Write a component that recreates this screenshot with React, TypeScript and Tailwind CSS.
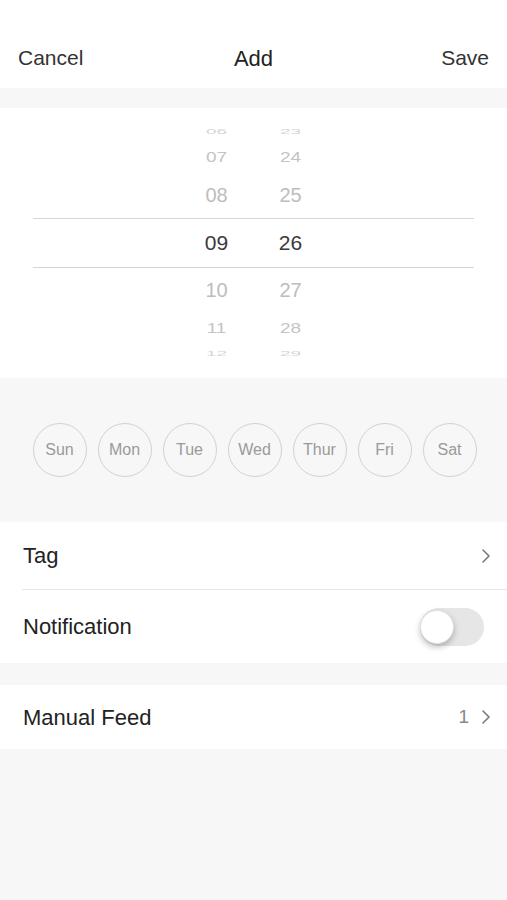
const hours = [
  { h: "06", m: "23", box: "h-[22px]", text: "text-[19px] text-[#d4d4d4] scale-y-[0.4]" },
  { h: "07", m: "24", box: "h-[30px]", text: "text-[19px] text-[#c4c4c4] scale-y-[0.75]" },
  { h: "08", m: "25", box: "h-[46px]", text: "text-[20px] text-[#bdbdbd]" },
];
const lower = [
  { h: "10", m: "27", box: "h-[44px]", text: "text-[20px] text-[#bdbdbd]" },
  { h: "11", m: "28", box: "h-[32px]", text: "text-[19px] text-[#c4c4c4] scale-y-[0.75]" },
  { h: "12", m: "29", box: "h-[18px]", text: "text-[19px] text-[#d4d4d4] scale-y-[0.4]" },
];
const days = ["Sun", "Mon", "Tue", "Wed", "Thur", "Fri", "Sat"];

const Chevron = () => (
  <svg width="10" height="16" viewBox="0 0 10 16" fill="none">
    <path d="M2 2l6 6-6 6" stroke="#7a7a7a" strokeWidth="1.6" strokeLinecap="round" strokeLinejoin="round" />
  </svg>
);

const PickerRow = ({ h, m, box, text }: { h: string; m: string; box: string; text: string }) => (
  <div className={`flex justify-center gap-[24px] items-center ${box}`}>
    <div className={`w-[50px] text-center leading-none ${text}`}>{h}</div>
    <div className={`w-[50px] text-center leading-none ${text}`}>{m}</div>
  </div>
);

const App = () => {
  return (
    <div className="w-[507px] h-[900px] bg-[#f7f7f7] font-['Liberation_Sans',Arial,sans-serif]">
      <header className="h-[88px] bg-white pt-[28px] px-[18px] grid grid-cols-3 items-center text-[21px] text-[#333]">
        <span>Cancel</span>
        <span className="text-center text-[22px] text-[#222]">Add</span>
        <span className="text-right pr-[-1px]">Save</span>
      </header>

      <section className="mt-[20px] h-[270px] bg-white px-[33px] pt-[12px]">
        {hours.map((r) => (
          <PickerRow key={r.h} {...r} />
        ))}
        <div className="h-[50px] border-y border-[#d6d6d6] flex justify-center gap-[24px] items-center">
          <div className="w-[50px] text-center text-[21px] text-[#3a3a3a]">09</div>
          <div className="w-[50px] text-center text-[21px] text-[#3a3a3a]">26</div>
        </div>
        {lower.map((r) => (
          <PickerRow key={r.h} {...r} />
        ))}
      </section>

      <section className="h-[144px] flex items-center justify-center gap-[11px] pl-[2px]">
        {days.map((d) => (
          <div
            key={d}
            className="w-[54px] h-[54px] rounded-full border-[1.5px] border-[#d2d2d2] flex items-center justify-center text-[16px] text-[#9a9a9a]"
          >
            {d}
          </div>
        ))}
      </section>

      <section className="bg-white">
        <div className="h-[67px] pl-[23px] pr-[16px] flex items-center justify-between">
          <span className="text-[22px] text-[#222]">Tag</span>
          <Chevron />
        </div>
        <div className="ml-[22px] border-t border-[#e6e6e6]" />
        <div className="h-[73px] pl-[23px] pr-[23px] flex items-center justify-between">
          <span className="text-[22px] text-[#222]">Notification</span>
          <div className="w-[64px] h-[38px] rounded-full bg-[#e6e6e6] relative">
            <div className="absolute left-0 top-[2px] w-[34px] h-[34px] rounded-full bg-white shadow-[0_3px_6px_rgba(0,0,0,0.25)] border border-[#e0e0e0]" />
          </div>
        </div>
      </section>

      <section className="mt-[22px] bg-white h-[64px] pl-[23px] pr-[16px] flex items-center justify-between">
        <span className="text-[22px] text-[#222]">Manual Feed</span>
        <div className="flex items-center gap-[12px]">
          <span className="text-[19px] text-[#888]">1</span>
          <Chevron />
        </div>
      </section>
    </div>
  );
};

export default App;
